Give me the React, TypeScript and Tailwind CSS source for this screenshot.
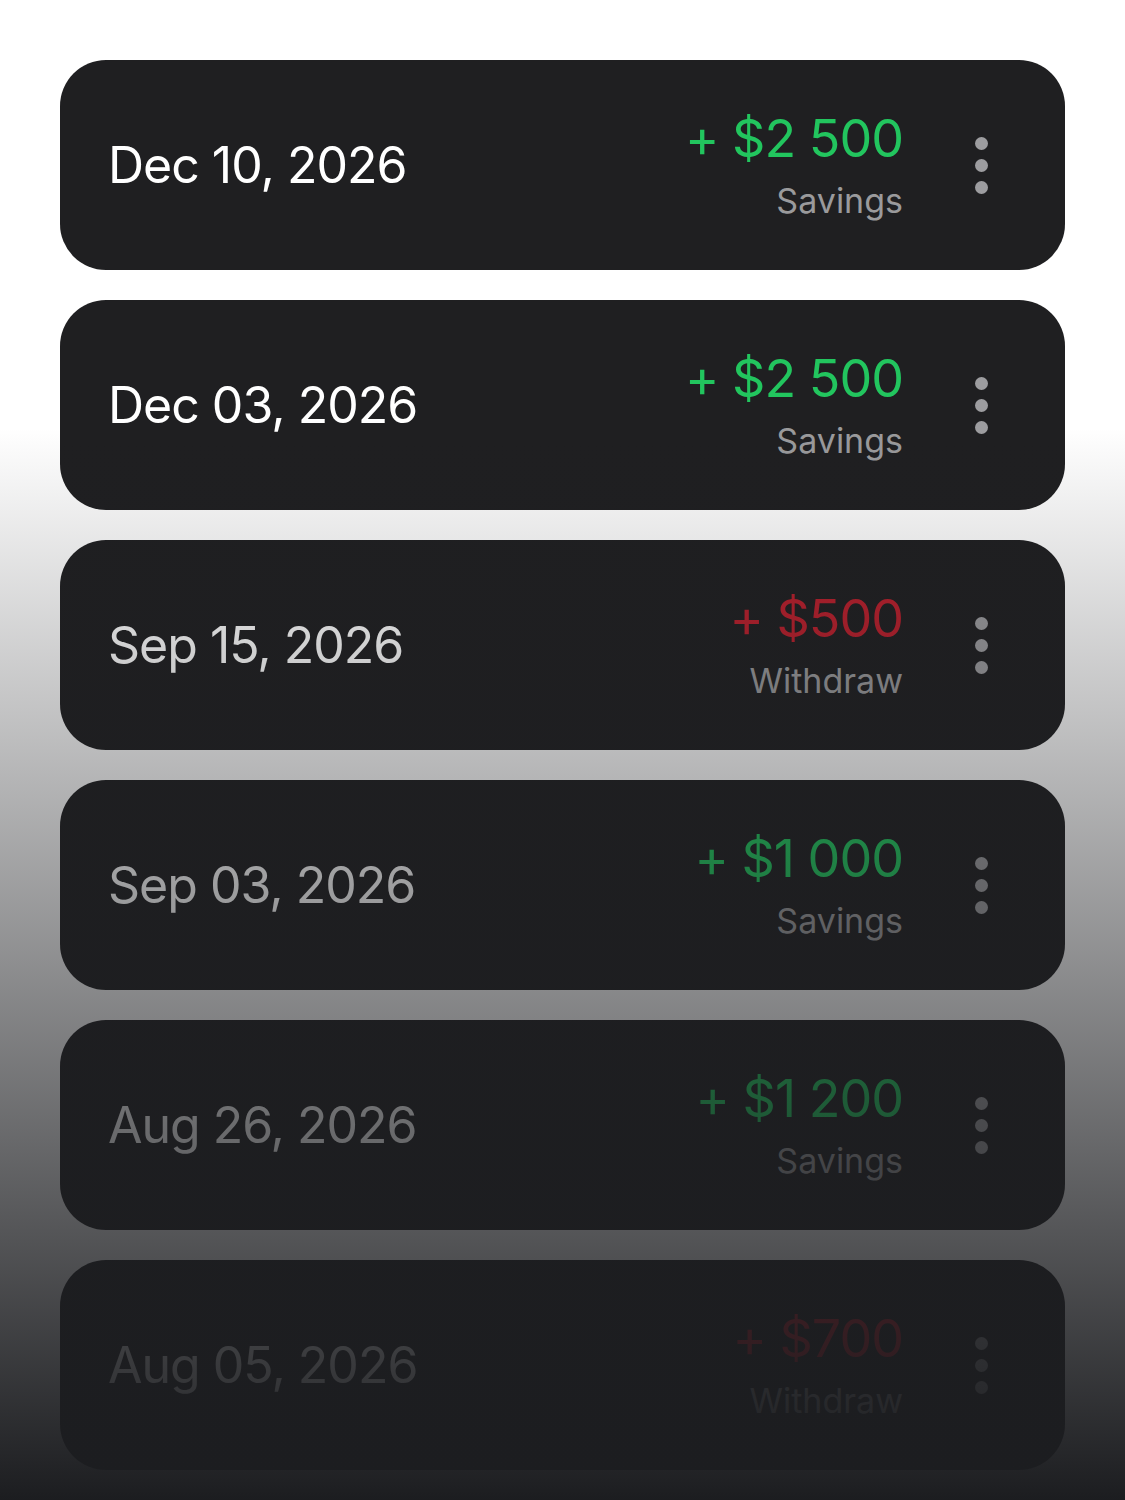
type Tx = {
  date: string;
  amount: string;
  kind: "Savings" | "Withdraw";
};

const txs: Tx[] = [
  { date: "Dec 10, 2026", amount: "$2 500", kind: "Savings" },
  { date: "Dec 03, 2026", amount: "$2 500", kind: "Savings" },
  { date: "Sep 15, 2026", amount: "$500", kind: "Withdraw" },
  { date: "Sep 03, 2026", amount: "$1 000", kind: "Savings" },
  { date: "Aug 26, 2026", amount: "$1 200", kind: "Savings" },
  { date: "Aug 05, 2026", amount: "$700", kind: "Withdraw" },
];

function Row({ tx }: { tx: Tx }) {
  const isSaving = tx.kind === "Savings";
  return (
    <div className="h-[210px] rounded-[46px] bg-[#1f1f21] flex items-center pl-[48px] pr-[77px]">
      <span className="flex-1 text-[50px] text-white tracking-[-1px] leading-none">
        {tx.date}
      </span>
      <div className="flex flex-col items-end">
        <span
          className={
            "text-[52px] leading-[60px] tracking-[-1px] " +
            (isSaving ? "text-[#22c55e]" : "text-[#b91f2c]")
          }
        >
          + {tx.amount}
        </span>
        <span className="mt-[12px] text-[34px] leading-[40px] text-[#9a9a9c]">
          {tx.kind}
        </span>
      </div>
      <div className="ml-[72px] flex flex-col gap-[9px] items-center">
        <span className="w-[13px] h-[13px] rounded-full bg-[#9d9da0]" />
        <span className="w-[13px] h-[13px] rounded-full bg-[#9d9da0]" />
        <span className="w-[13px] h-[13px] rounded-full bg-[#9d9da0]" />
      </div>
    </div>
  );
}

export default function App() {
  return (
    <div
      className="relative min-h-[1500px] bg-white overflow-hidden"
      style={{ fontFamily: "Inter, 'Noto Sans', sans-serif" }}
    >
      <div className="flex flex-col gap-[30px] px-[60px] pt-[60px] pb-[30px]">
        {txs.map((tx, i) => (
          <Row key={i} tx={tx} />
        ))}
      </div>
      {/* fade over the lower part of the list */}
      <div className="pointer-events-none absolute inset-0 bg-linear-to-b/srgb from-[#1c1d2000] from-[28.5%] to-[#1c1d20] to-100%" />
    </div>
  );
}
